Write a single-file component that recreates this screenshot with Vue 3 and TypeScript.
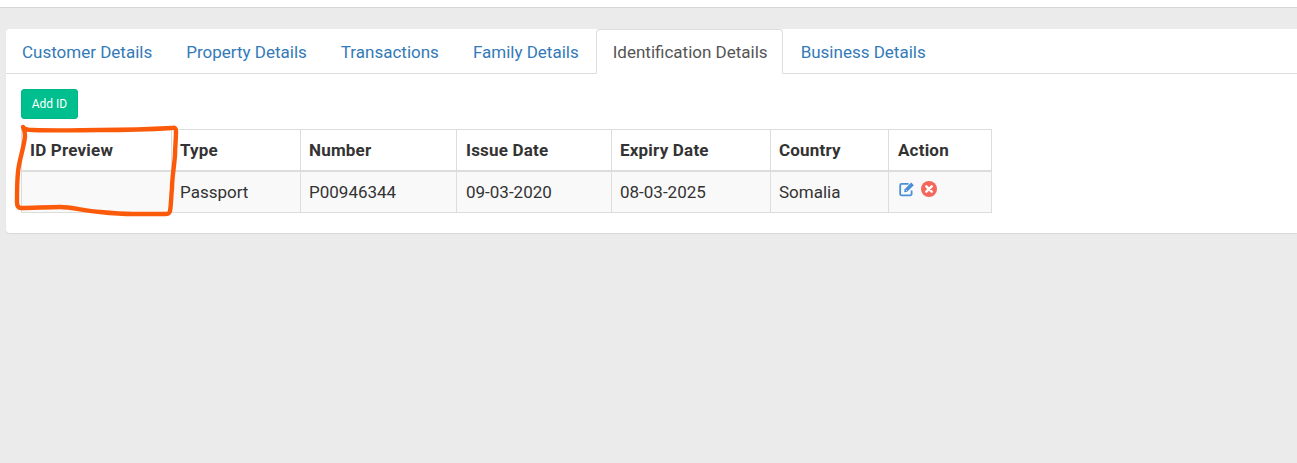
<script setup lang="ts">
const tabs = [
  { label: 'Customer Details', active: false },
  { label: 'Property Details', active: false },
  { label: 'Transactions', active: false },
  { label: 'Family Details', active: false },
  { label: 'Identification Details', active: true },
  { label: 'Business Details', active: false },
]
const columns = [
  { label: 'ID Preview', width: 150 },
  { label: 'Type', width: 129 },
  { label: 'Number', width: 156 },
  { label: 'Issue Date', width: 155 },
  { label: 'Expiry Date', width: 159 },
  { label: 'Country', width: 118 },
  { label: 'Action', width: 103 },
]
const row = ['', 'Passport', 'P00946344', '09-03-2020', '08-03-2025', 'Somalia']
</script>

<template>
  <div class="page">
    <div class="topbar"></div>
    <div class="card">
      <ul class="tabs">
        <li v-for="t in tabs" :key="t.label" class="tab" :class="{ active: t.active }">{{ t.label }}</li>
      </ul>
      <div class="body">
        <button class="add" type="button">Add ID</button>
        <table class="grid">
          <colgroup>
            <col v-for="c in columns" :key="c.label" :style="{ width: c.width + 'px' }" />
          </colgroup>
          <thead>
            <tr>
              <th v-for="c in columns" :key="c.label">{{ c.label }}</th>
            </tr>
          </thead>
          <tbody>
            <tr>
              <td v-for="(v, i) in row" :key="i">{{ v }}</td>
              <td class="actions">
                <svg class="icon" width="16" height="16" viewBox="0 0 16 16" aria-label="Edit">
                  <path d="M12.6 9.6v3.3a1.4 1.4 0 0 1-1.4 1.4H2.6a1.4 1.4 0 0 1-1.4-1.4V4.3a1.4 1.4 0 0 1 1.4-1.4h7" fill="none" stroke="#4a90d9" stroke-width="1.8" />
                  <path d="M5.6 8.2 12.2 1.6l2.6 2.6-6.6 6.6-3.1.5z" fill="#4a90d9" />
                  <path d="M6.9 8.9l1 1" stroke="#fff" stroke-width="0.8" />
                </svg>
                <svg class="icon" width="16" height="16" viewBox="0 0 16 16" aria-label="Remove">
                  <circle cx="8" cy="8" r="8" fill="#f4675a" />
                  <path d="M5.3 5.3l5.4 5.4M10.7 5.3l-5.4 5.4" stroke="#fff" stroke-width="2.5" stroke-linecap="round" />
                </svg>
              </td>
            </tr>
          </tbody>
        </table>
      </div>
    </div>
    <svg class="scribble" width="1297" height="463" viewBox="0 0 1297 463">
      <path d="M23 127 C24 129 28 130 33 130 C60 131 80 130 100 130 C130 130 155 129 172 128 C175 127 176 129 176 131 C176 140 175 148 175 155 C174 168 172 178 172 188 C171 198 171 206 170 211 C169 214 168 214 165 214 C155 214 145 214 133 214 C120 214 110 213 100 212 C85 211 72 207 60 207 C48 207 32 208 21 208 C18 208 17 206 17 202 C17 192 17 182 18 172 C19 160 24 148 25 136 C25 132 24 129 23 127 Z" fill="none" stroke="#fb5a0a" stroke-width="4.4" stroke-linejoin="round" />
    </svg>
  </div>
</template>

<style>
html, body { margin: 0; background: #ebebeb; }
</style>

<style scoped>
.page {
  position: relative;
  height: 463px;
  overflow: hidden;
  background: #ebebeb;
  font-family: Roboto, "Liberation Sans", sans-serif;
  font-size: 17px;
  color: #333;
}
.topbar {
  height: 7px;
  background: #fff;
  border-bottom: 1px solid #d6d6d6;
}
.card {
  margin: 21px 0 0 6px;
  height: 204px;
  background: #fff;
  border-radius: 4px 0 0 4px;
  box-shadow: 0 1px 1px rgba(0, 0, 0, 0.08);
}
.tabs {
  display: flex;
  margin: 0;
  padding: 0;
  list-style: none;
  height: 44px;
  border-bottom: 1px solid #ddd;
}
.tab {
  box-sizing: border-box;
  height: 45px;
  margin-right: 2px;
  padding: 11px 15px 0;
  border: 1px solid transparent;
  border-radius: 4px 4px 0 0;
  line-height: 22px;
  color: #337ab7;
  white-space: nowrap;
}
.tab.active {
  margin-left: -1px;
  padding: 11px 14px 0 16px;
  background: #fff;
  color: #555;
  border-color: #ddd #ddd #fff;
}
.body {
  padding: 15px;
}
.add {
  display: block;
  box-sizing: border-box;
  width: 57px;
  height: 30px;
  padding: 0;
  border: 1px solid #00b586;
  border-radius: 3px;
  background: #00bf8e;
  color: #fff;
  font: 12px Roboto, sans-serif;
}
.grid {
  margin-top: 10px;
  width: 970px;
  table-layout: fixed;
  border-collapse: collapse;
  line-height: 22px;
}
th, td {
  box-sizing: border-box;
  padding: 9px 8px 9px;
  border: 1px solid #ddd;
  text-align: left;
}
th:nth-child(4), td:nth-child(4), th:nth-child(7) {
  padding-left: 9px;
}
th {
  font-weight: 700;
  border-bottom-width: 2px;
  color: #333;
  letter-spacing: 0.2px;
}
tbody tr { background: #f9f9f9; }
td { height: 41px; }
td.actions {
  padding: 9px 0 0 10px;
  vertical-align: top;
}
.icon {
  display: inline-block;
  vertical-align: top;
  margin-right: 6px;
}
.scribble {
  position: absolute;
  left: 0;
  top: 0;
  pointer-events: none;
}
</style>
